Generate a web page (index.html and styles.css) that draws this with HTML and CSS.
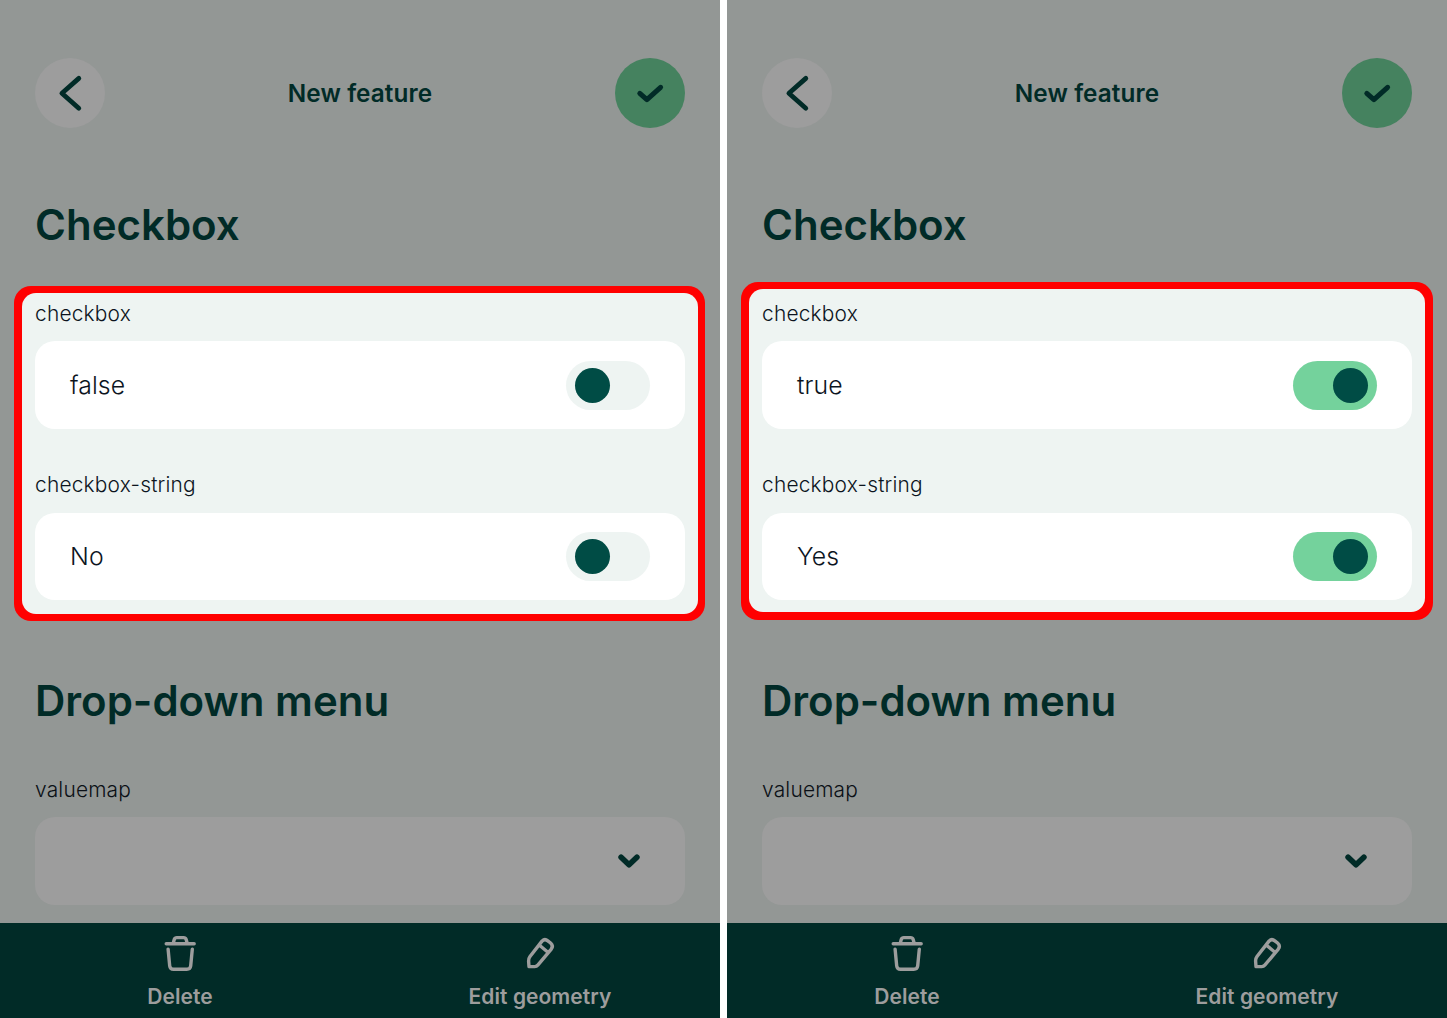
FILE: index.html
```
<!DOCTYPE html>
<html lang="en">
<head>
<meta charset="utf-8">
<title>New feature</title>
<link rel="stylesheet" href="styles.css">
</head>
<body>
<svg class="sprite" aria-hidden="true">
  <symbol id="back" viewBox="0 0 70 70"><path d="M43.8 20.4 26.9 35.2 43.8 50.2"/></symbol>
  <symbol id="check" viewBox="0 0 70 70"><path d="M24.8 35.3 31.9 41.7 45.6 29.3"/></symbol>
  <symbol id="chevron" viewBox="0 0 24 16"><path d="M4.1 4.2 12 11.8 19.9 4.2"/></symbol>
  <symbol id="trash" viewBox="0 0 36 40"><path d="M4.2 10.7H32.2M11.3 10 12.3 6.3Q12.9 4.6 14.8 4.6H21.6Q23.5 4.6 24.1 6.3L25.1 10M6.1 16.2 7.7 32.9Q8.1 36.3 11.6 36.3H24.8Q28.3 36.3 28.7 32.9L30.3 16.2"/></symbol>
  <symbol id="pencil" viewBox="0 0 36 40"><path d="M20.2 7.9Q22.8 5.4 25.8 7.8L28.6 10Q31.7 12.8 29.3 16.1L15.8 32.2Q14.6 33.6 12.8 33.6H7L6.6 28.1Q6.5 25.6 8 23.6ZM17.2 12 25.9 19.2"/></symbol>
</svg>
<main class="screens">
  <section class="phone">
    <header class="topbar">
      <span class="round"><svg class="icon-back"><use href="#back"/></svg></span>
      <span class="title">New feature</span>
      <span class="round confirm"><svg class="icon-check"><use href="#check"/></svg></span>
    </header>
    <h2 class="heading">Checkbox</h2>
    <div class="highlight">
      <div class="panel">
        <div class="label">checkbox</div>
        <div class="field"><span>false</span><span class="switch"><i class="knob"></i></span></div>
        <div class="label second">checkbox-string</div>
        <div class="field"><span>No</span><span class="switch"><i class="knob"></i></span></div>
      </div>
    </div>
    <h2 class="heading lower">Drop-down menu</h2>
    <div class="label muted">valuemap</div>
    <div class="field select"><svg class="icon-chevron"><use href="#chevron"/></svg></div>
    <footer class="actions">
      <div class="action"><svg><use href="#trash"/></svg><span>Delete</span></div>
      <div class="action"><svg><use href="#pencil"/></svg><span>Edit geometry</span></div>
    </footer>
  </section>
  <section class="phone">
    <header class="topbar">
      <span class="round"><svg class="icon-back"><use href="#back"/></svg></span>
      <span class="title">New feature</span>
      <span class="round confirm"><svg class="icon-check"><use href="#check"/></svg></span>
    </header>
    <h2 class="heading">Checkbox</h2>
    <div class="highlight tall">
      <div class="panel">
        <div class="label">checkbox</div>
        <div class="field"><span>true</span><span class="switch on"><i class="knob"></i></span></div>
        <div class="label second">checkbox-string</div>
        <div class="field"><span>Yes</span><span class="switch on"><i class="knob"></i></span></div>
      </div>
    </div>
    <h2 class="heading lower">Drop-down menu</h2>
    <div class="label muted">valuemap</div>
    <div class="field select"><svg class="icon-chevron"><use href="#chevron"/></svg></div>
    <footer class="actions">
      <div class="action"><svg><use href="#trash"/></svg><span>Delete</span></div>
      <div class="action"><svg><use href="#pencil"/></svg><span>Edit geometry</span></div>
    </footer>
  </section>
</main>
</body>
</html>
```
FILE: styles.css
```
* { box-sizing: border-box; }
body { margin: 0; background: #fff; font-family: Inter, "Liberation Sans", sans-serif; color: #0c141e; }
.sprite { position: absolute; width: 0; height: 0; }
.screens { display: flex; gap: 7px; width: 1447px; height: 1018px; overflow: hidden; }
.phone { width: 720px; height: 1018px; display: flex; flex-direction: column; background: #939795; }
svg { display: block; fill: none; stroke: #012b27; stroke-linecap: round; stroke-linejoin: round; }

.topbar { display: flex; align-items: center; justify-content: space-between; padding: 58px 35px 0; }
.round { width: 70px; height: 70px; border-radius: 50%; background: #9d9d9d; }
.round svg { width: 70px; height: 70px; }
.confirm { background: #45825f; }
.icon-back { stroke-width: 4.8; }
.icon-check { stroke-width: 5; }
.title { font-size: 24.3px; font-weight: 600; line-height: 30px; letter-spacing: 0.1px; color: #012b27; }

.heading { margin: 72px 0 0 35px; font-size: 42px; font-weight: 600; line-height: 50px; color: #012b27; }
.highlight { height: 335.5px; margin: 35.5px 14.7px 0 14px; padding: 7.5px 7.3px 7.5px 8px; border-radius: 17px; background: #f00; }
.panel { height: 100%; padding: 8px 13px 0; border-radius: 14px; background: #eef4f2; }
.tall { height: 338.5px; margin: 31.5px 14px 0; padding: 7.5px 8px 8px; }
.tall .panel { padding-top: 12px; }
.label { height: 26px; font-size: 20.9px; font-weight: 350; line-height: 26px; letter-spacing: 0.2px; }
.second { margin-top: 43.5px; }
.field { display: flex; align-items: center; justify-content: space-between; height: 87.5px; margin-top: 14.3px; padding: 0 35px; border-radius: 20px; background: #fff; font-size: 24.8px; font-weight: 350; letter-spacing: 0.1px; }
.switch { display: flex; width: 84px; height: 49px; padding: 7px 9px; border-radius: 25px; background: #eef4f2; }
.on { justify-content: flex-end; background: #74d29c; }
.knob { width: 35px; height: 35px; border-radius: 50%; background: #004c45; }

.lower { margin-top: 55px; }
.tall + .lower { margin-top: 56px; }
.muted { margin: 51px 0 0 35px; color: #0b1016; }
.select { flex: none; height: 87.5px; margin: 14.3px 35px 0; justify-content: flex-end; padding-right: 44px; background: #9d9d9d; }
.icon-chevron { width: 24px; height: 16px; stroke-width: 5.6; }

.actions { display: flex; height: 95px; margin-top: auto; background: #012b27; color: #9d9d9d; font-size: 21px; font-weight: 600; letter-spacing: 0.05px; }
.action { flex: 1; display: flex; flex-direction: column; align-items: center; padding-top: 10px; line-height: 26px; }
.action svg { width: 36px; height: 40px; margin-bottom: 10.5px; stroke: #9d9d9d; stroke-width: 3.4; }
```
